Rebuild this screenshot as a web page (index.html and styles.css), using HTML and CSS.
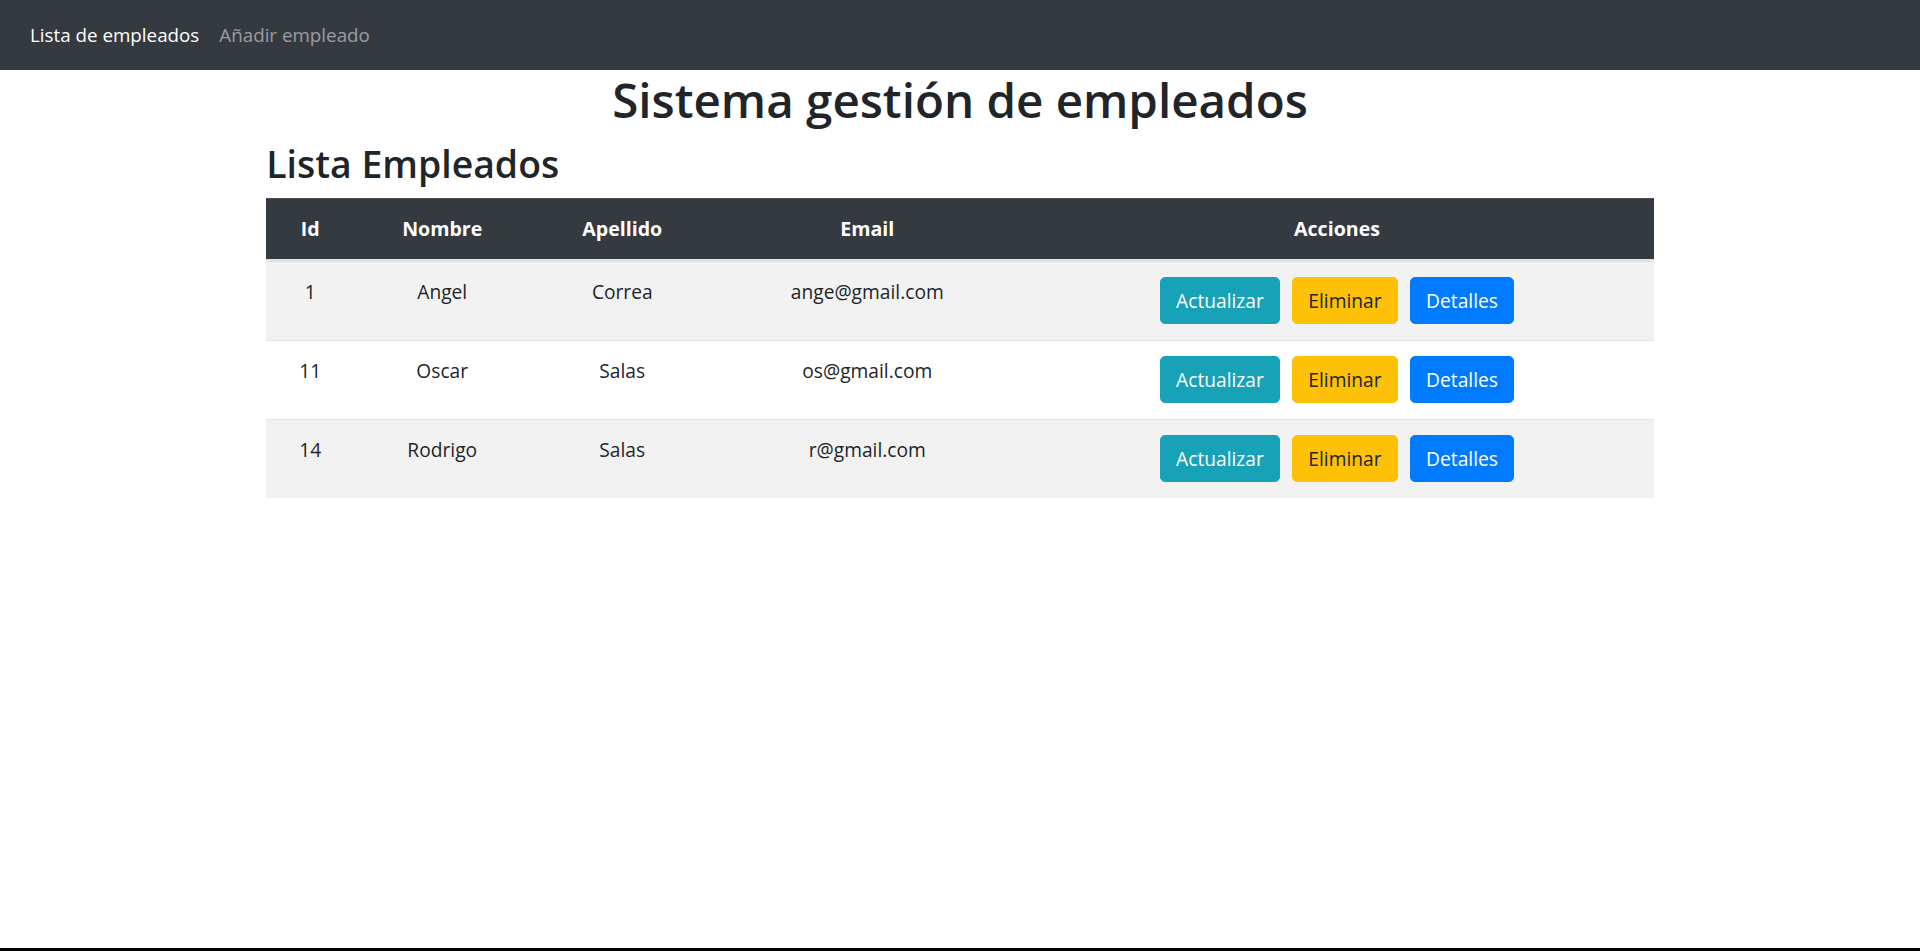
FILE: index.html
```html
<!DOCTYPE html>
<html lang="es">
<head>
<meta charset="utf-8">
<title>Sistema gestión de empleados</title>
<link rel="stylesheet" href="styles.css">
</head>
<body>
<nav class="navbar">
  <a class="nav-link active" href="#">Lista de empleados</a>
  <a class="nav-link" href="#">Añadir empleado</a>
</nav>
<main class="container">
  <h1 class="title">Sistema gestión de empleados</h1>
  <h2 class="subtitle">Lista Empleados</h2>
  <table class="table">
    <colgroup>
      <col class="c-id"><col class="c-nombre"><col class="c-apellido"><col class="c-email"><col class="c-acciones">
    </colgroup>
    <thead>
      <tr><th>Id</th><th>Nombre</th><th>Apellido</th><th>Email</th><th>Acciones</th></tr>
    </thead>
    <tbody>
      <tr class="odd">
        <td>1</td><td>Angel</td><td>Correa</td><td>ange@gmail.com</td>
        <td><button class="btn btn-info">Actualizar</button><button class="btn btn-warning">Eliminar</button><button class="btn btn-primary">Detalles</button></td>
      </tr>
      <tr>
        <td>11</td><td>Oscar</td><td>Salas</td><td>os@gmail.com</td>
        <td><button class="btn btn-info">Actualizar</button><button class="btn btn-warning">Eliminar</button><button class="btn btn-primary">Detalles</button></td>
      </tr>
      <tr class="odd">
        <td>14</td><td>Rodrigo</td><td>Salas</td><td>r@gmail.com</td>
        <td><button class="btn btn-info">Actualizar</button><button class="btn btn-warning">Eliminar</button><button class="btn btn-primary">Detalles</button></td>
      </tr>
    </tbody>
  </table>
</main>
<div class="bottom-bar"></div>
</body>
</html>
```
FILE: styles.css
```css
html, body { height: 100%; }
body {
  margin: 0;
  display: flex;
  flex-direction: column;
  min-height: 100vh;
  font-family: "Open Sans", "Noto Sans", sans-serif;
  font-size: 19.2px;
  line-height: 30px;
  color: #212529;
  background: #fff;
}
.navbar {
  background: #343a40;
  height: 70px;
  padding: 10px 20px;
  box-sizing: border-box;
  display: flex;
  align-items: center;
}
.nav-link {
  padding: 10px;
  color: rgba(255,255,255,.5);
  text-decoration: none;
  font-size: 18.8px;
  line-height: 30px;
}
.nav-link.active { color: #fff; }
.container {
  width: 1387.5px;
  margin: 0 auto;
  flex: 1 0 auto;
}
.title {
  margin: 0 0 10px;
  text-align: center;
  font-size: 47.5px;
  line-height: 60px;
  font-weight: 600;
}
.subtitle {
  margin: 0 0 10px;
  font-size: 37.4px;
  line-height: 48px;
  font-weight: 600;
}
.table {
  width: 100%;
  border-collapse: collapse;
  table-layout: fixed;
}
.c-id { width: 88px; }
.c-nombre { width: 176px; }
.c-apellido { width: 184px; }
.c-email { width: 306px; }
.table th {
  background: #343a40;
  color: #fff;
  font-weight: 700;
  font-size: 19.6px;
  padding: 15px;
  line-height: 30px;
  border-top: 1px solid #454d55;
  border-bottom: 3px solid #dee2e6;
  text-align: center;
}
.table td {
  padding: 15px 15px 16px;
  line-height: 30px;
  border-top: 1px solid #dee2e6;
  text-align: center;
  vertical-align: top;
}
.table thead + tbody tr:first-child td { border-top: 0; }
.table tr.odd td { background: #f2f2f2; }
.btn {
  font-family: inherit;
  font-size: 19.2px;
  line-height: 30px;
  height: 47px;
  padding: 7.5px 15px;
  border: 1px solid transparent;
  border-radius: 5px;
  margin: 0;
  cursor: pointer;
}
.btn + .btn { margin-left: 12.5px; }
.btn-info { background: #17a2b8; border-color: #17a2b8; color: #fff; }
.btn-warning { background: #ffc107; border-color: #ffc107; color: #212529; }
.btn-primary { background: #007bff; border-color: #007bff; color: #fff; }
.bottom-bar {
  height: 3px;
  background: #000;
  flex: 0 0 3px;
}
```
